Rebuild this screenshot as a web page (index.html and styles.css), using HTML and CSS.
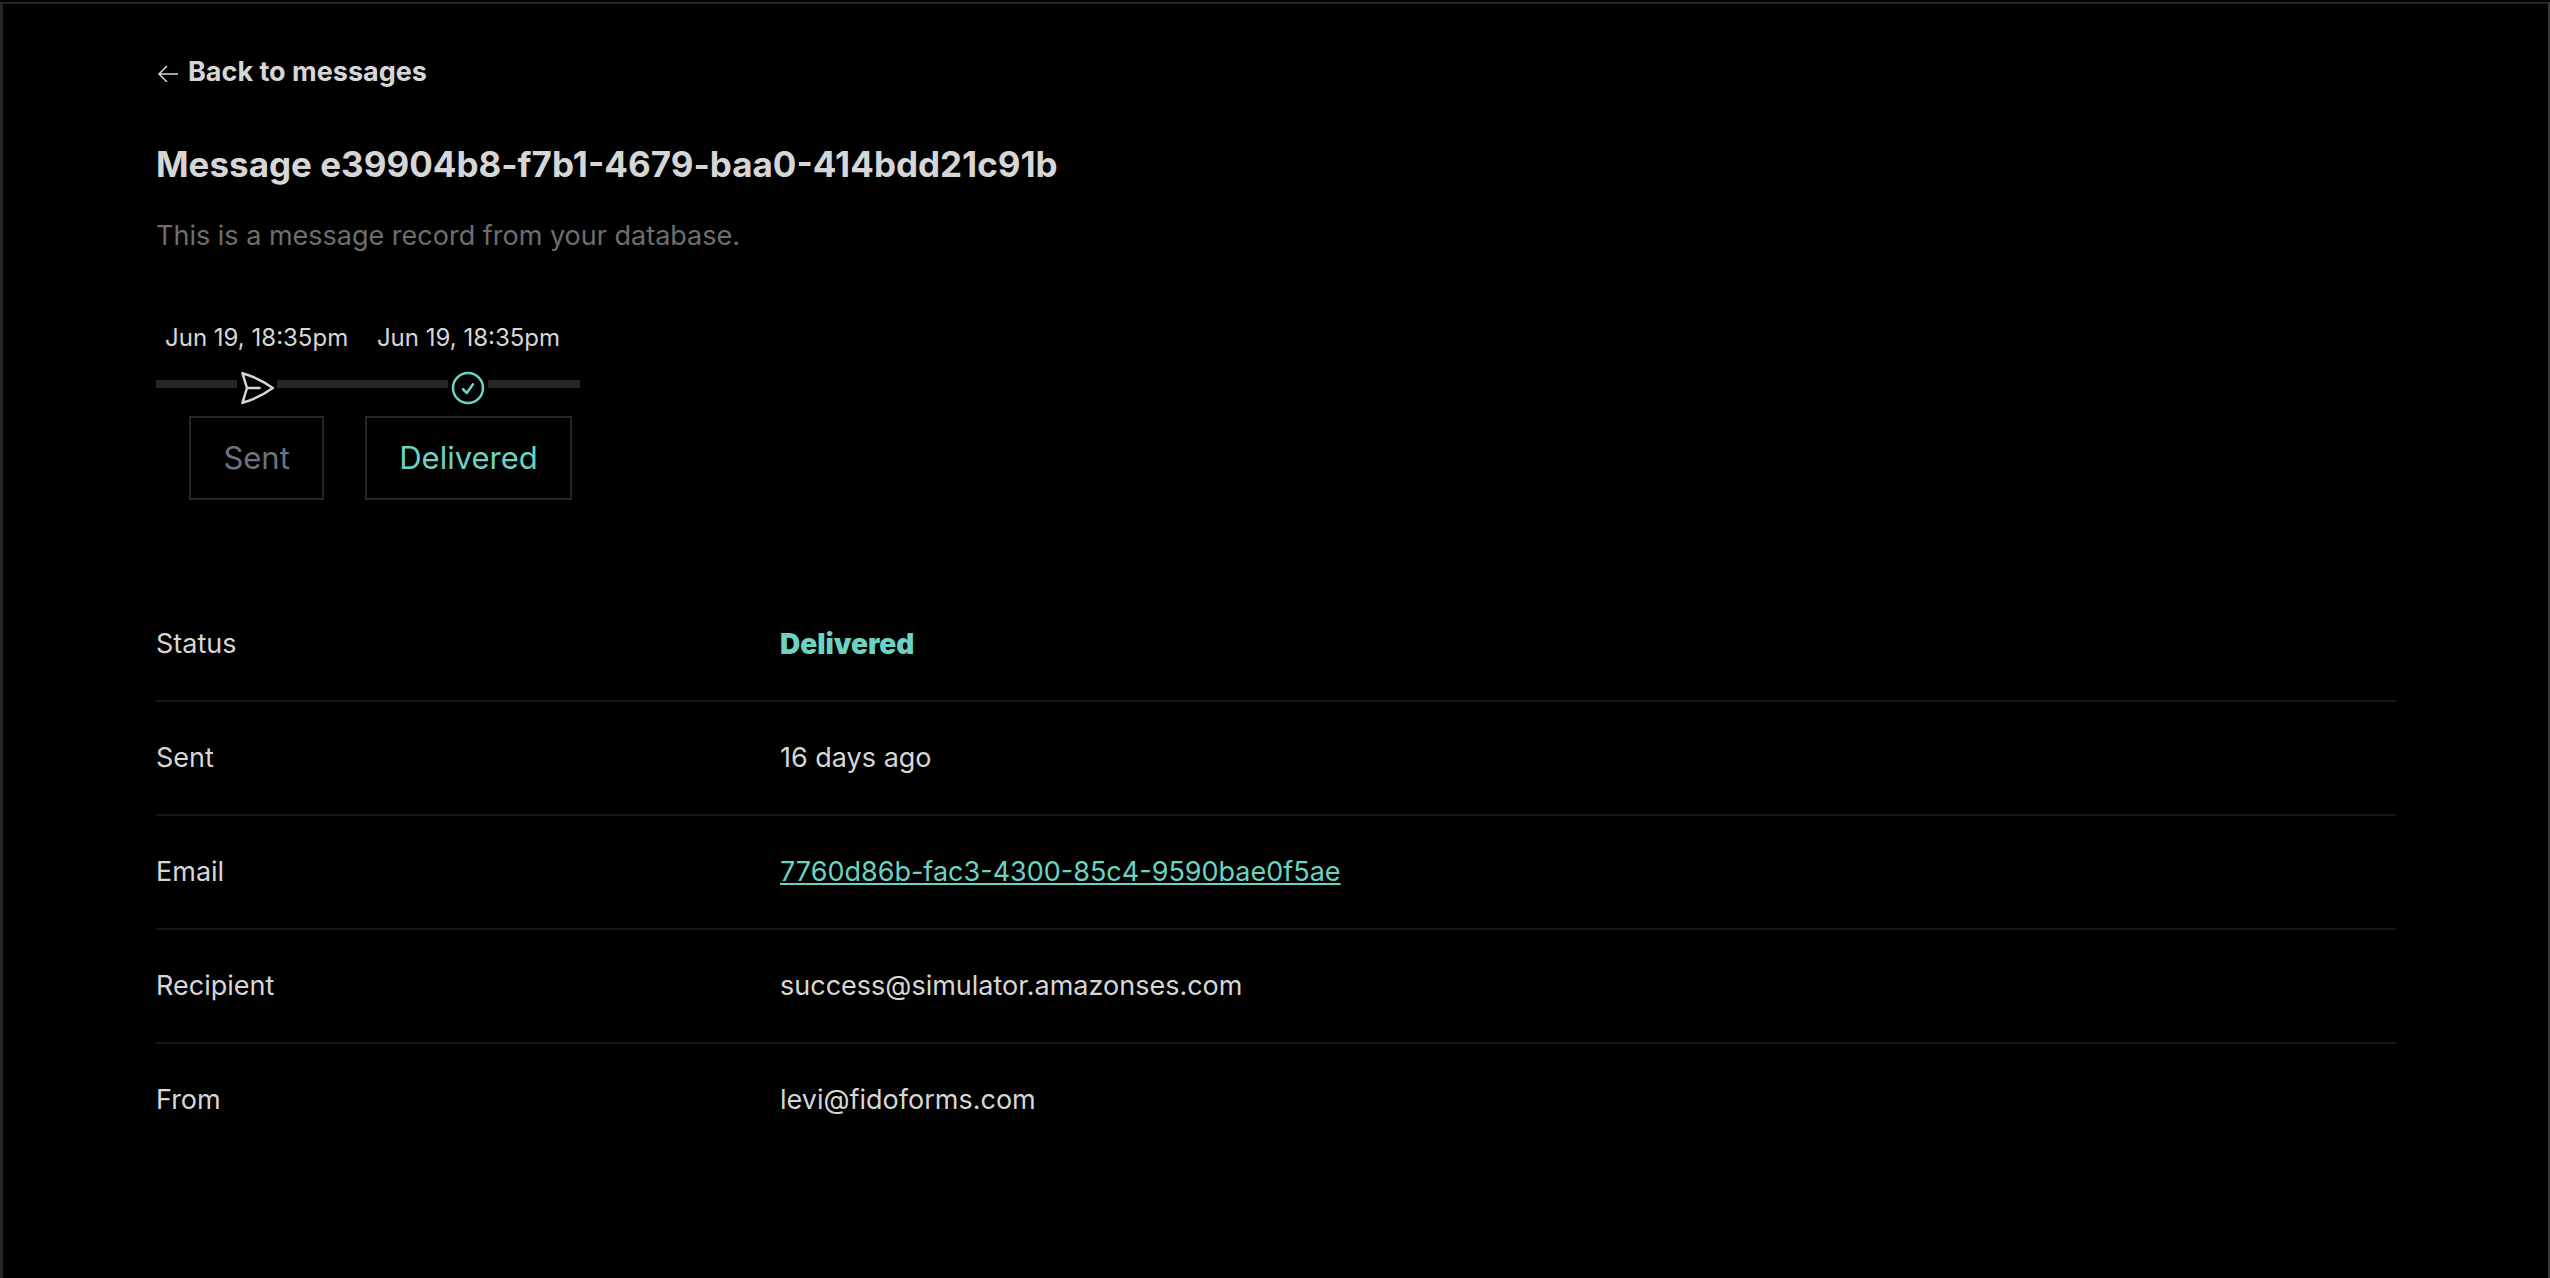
FILE: index.html
```
<!DOCTYPE html>
<html lang="en">

<head>
  <meta charset="utf-8">
  <meta name="viewport" content="width=device-width, initial-scale=1.0">
  <title>Message</title>
  <link rel="stylesheet" href="styles.css">
</head>

<body>
  <main class="panel">
    <a class="back" href="#">
      <svg class="back-arrow" viewBox="0 0 22 20" fill="none" stroke="currentColor" stroke-width="1.5">
        <path d="M22 12H3M11 4L3 12l8 8" />
      </svg>
      Back to messages
    </a>
    <h1>Message e39904b8-f7b1-4679-baa0-414bdd21c91b</h1>
    <p class="intro">This is a message record from your database.</p>

    <ol class="timeline">
      <li class="step">
        <time>Jun 19, 18:35pm</time>
        <div class="track">
          <svg class="icon" viewBox="0 0 24 24" fill="none" stroke="currentColor" stroke-width="1.5" stroke-linecap="round" stroke-linejoin="round">
            <path d="M6 12L3.269 3.126A59.768 59.768 0 0121.485 12 59.77 59.77 0 013.27 20.876L5.999 12zm0 0h7.5" />
          </svg>
        </div>
        <span class="badge">Sent</span>
      </li>
      <li class="step delivered">
        <time>Jun 19, 18:35pm</time>
        <div class="track">
          <svg class="icon" viewBox="0 0 24 24" fill="none" stroke="currentColor" stroke-width="1.5" stroke-linecap="round" stroke-linejoin="round">
            <path d="M9 12.75L11.25 15 15 9.750M21 12a9 9 0 11-18 0 9 9 0 0118 0z" />
          </svg>
        </div>
        <span class="badge">Delivered</span>
      </li>
    </ol>

    <dl class="details">
      <div class="row">
        <dt>Status</dt>
        <dd class="status">Delivered</dd>
      </div>
      <div class="row">
        <dt>Sent</dt>
        <dd>16 days ago</dd>
      </div>
      <div class="row">
        <dt>Email</dt>
        <dd><a href="#">7760d86b-fac3-4300-85c4-9590bae0f5ae</a></dd>
      </div>
      <div class="row">
        <dt>Recipient</dt>
        <dd>success@simulator.amazonses.com</dd>
      </div>
      <div class="row">
        <dt>From</dt>
        <dd>levi@fidoforms.com</dd>
      </div>
    </dl>
  </main>
</body>

</html>
```

FILE: styles.css
```
* {
  box-sizing: border-box;
}

body {
  margin: 0;
  padding-top: 2px;
  background-color: #000;
  color: #d6d6d6;
  font-family: Inter, "Liberation Sans", sans-serif;
  font-size: 27px;
  line-height: 40px;
}

.panel {
  min-height: calc(100vh - 2px);
  padding: 48px 152px 48px 153px;
  border: solid #262626;
  border-width: 2px 2px 0 3px;
  border-right-color: #3a3a3a;
}

.back {
  display: flex;
  width: fit-content;
  gap: 10px;
  align-items: center;
  color: inherit;
  font-weight: 700;
  text-decoration: none;
}

.back-arrow {
  width: 22px;
  height: 20px;
}

h1 {
  margin: 48px 0 0;
  font-size: 35px;
  font-weight: 700;
  line-height: 48px;
}

.intro {
  margin: 28px 0 0;
  color: #6e6e6e;
}

/* timeline */
.timeline {
  display: flex;
  margin: 64px 0 0;
  padding: 0;
  list-style: none;
}

.step {
  display: flex;
  flex-direction: column;
  align-items: center;
}

.step time {
  padding: 0 9px;
  font-size: 24px;
  line-height: 36px;
}

.track {
  display: flex;
  width: 100%;
  margin-top: 12px;
}

.track::before,
.track::after {
  content: "";
  flex: 1;
  height: 8px;
  margin-top: 12px;
  background-color: #262626;
}

.icon {
  width: 40px;
  height: 40px;
}

.badge {
  margin: 8px 8px 0;
  padding: 20px 32px;
  border: 2px solid #262626;
  color: #6b7280;
  font-size: 31px;
}

.delivered .icon,
.delivered .badge {
  color: #6bd3c1;
}

/* details */
.details {
  margin: 88px 0 0;
}

.row {
  display: flex;
  padding: 36px 0;
  border-bottom: 2px solid #171717;
}

.row:last-child {
  border-bottom: 0;
}

dt {
  width: 624px;
}

dd {
  margin: 0;
}

dd a {
  color: #6bd3c1;
}

.status {
  color: #6bd3c1;
  font-size: 28px;
  font-weight: 900;
}
```
